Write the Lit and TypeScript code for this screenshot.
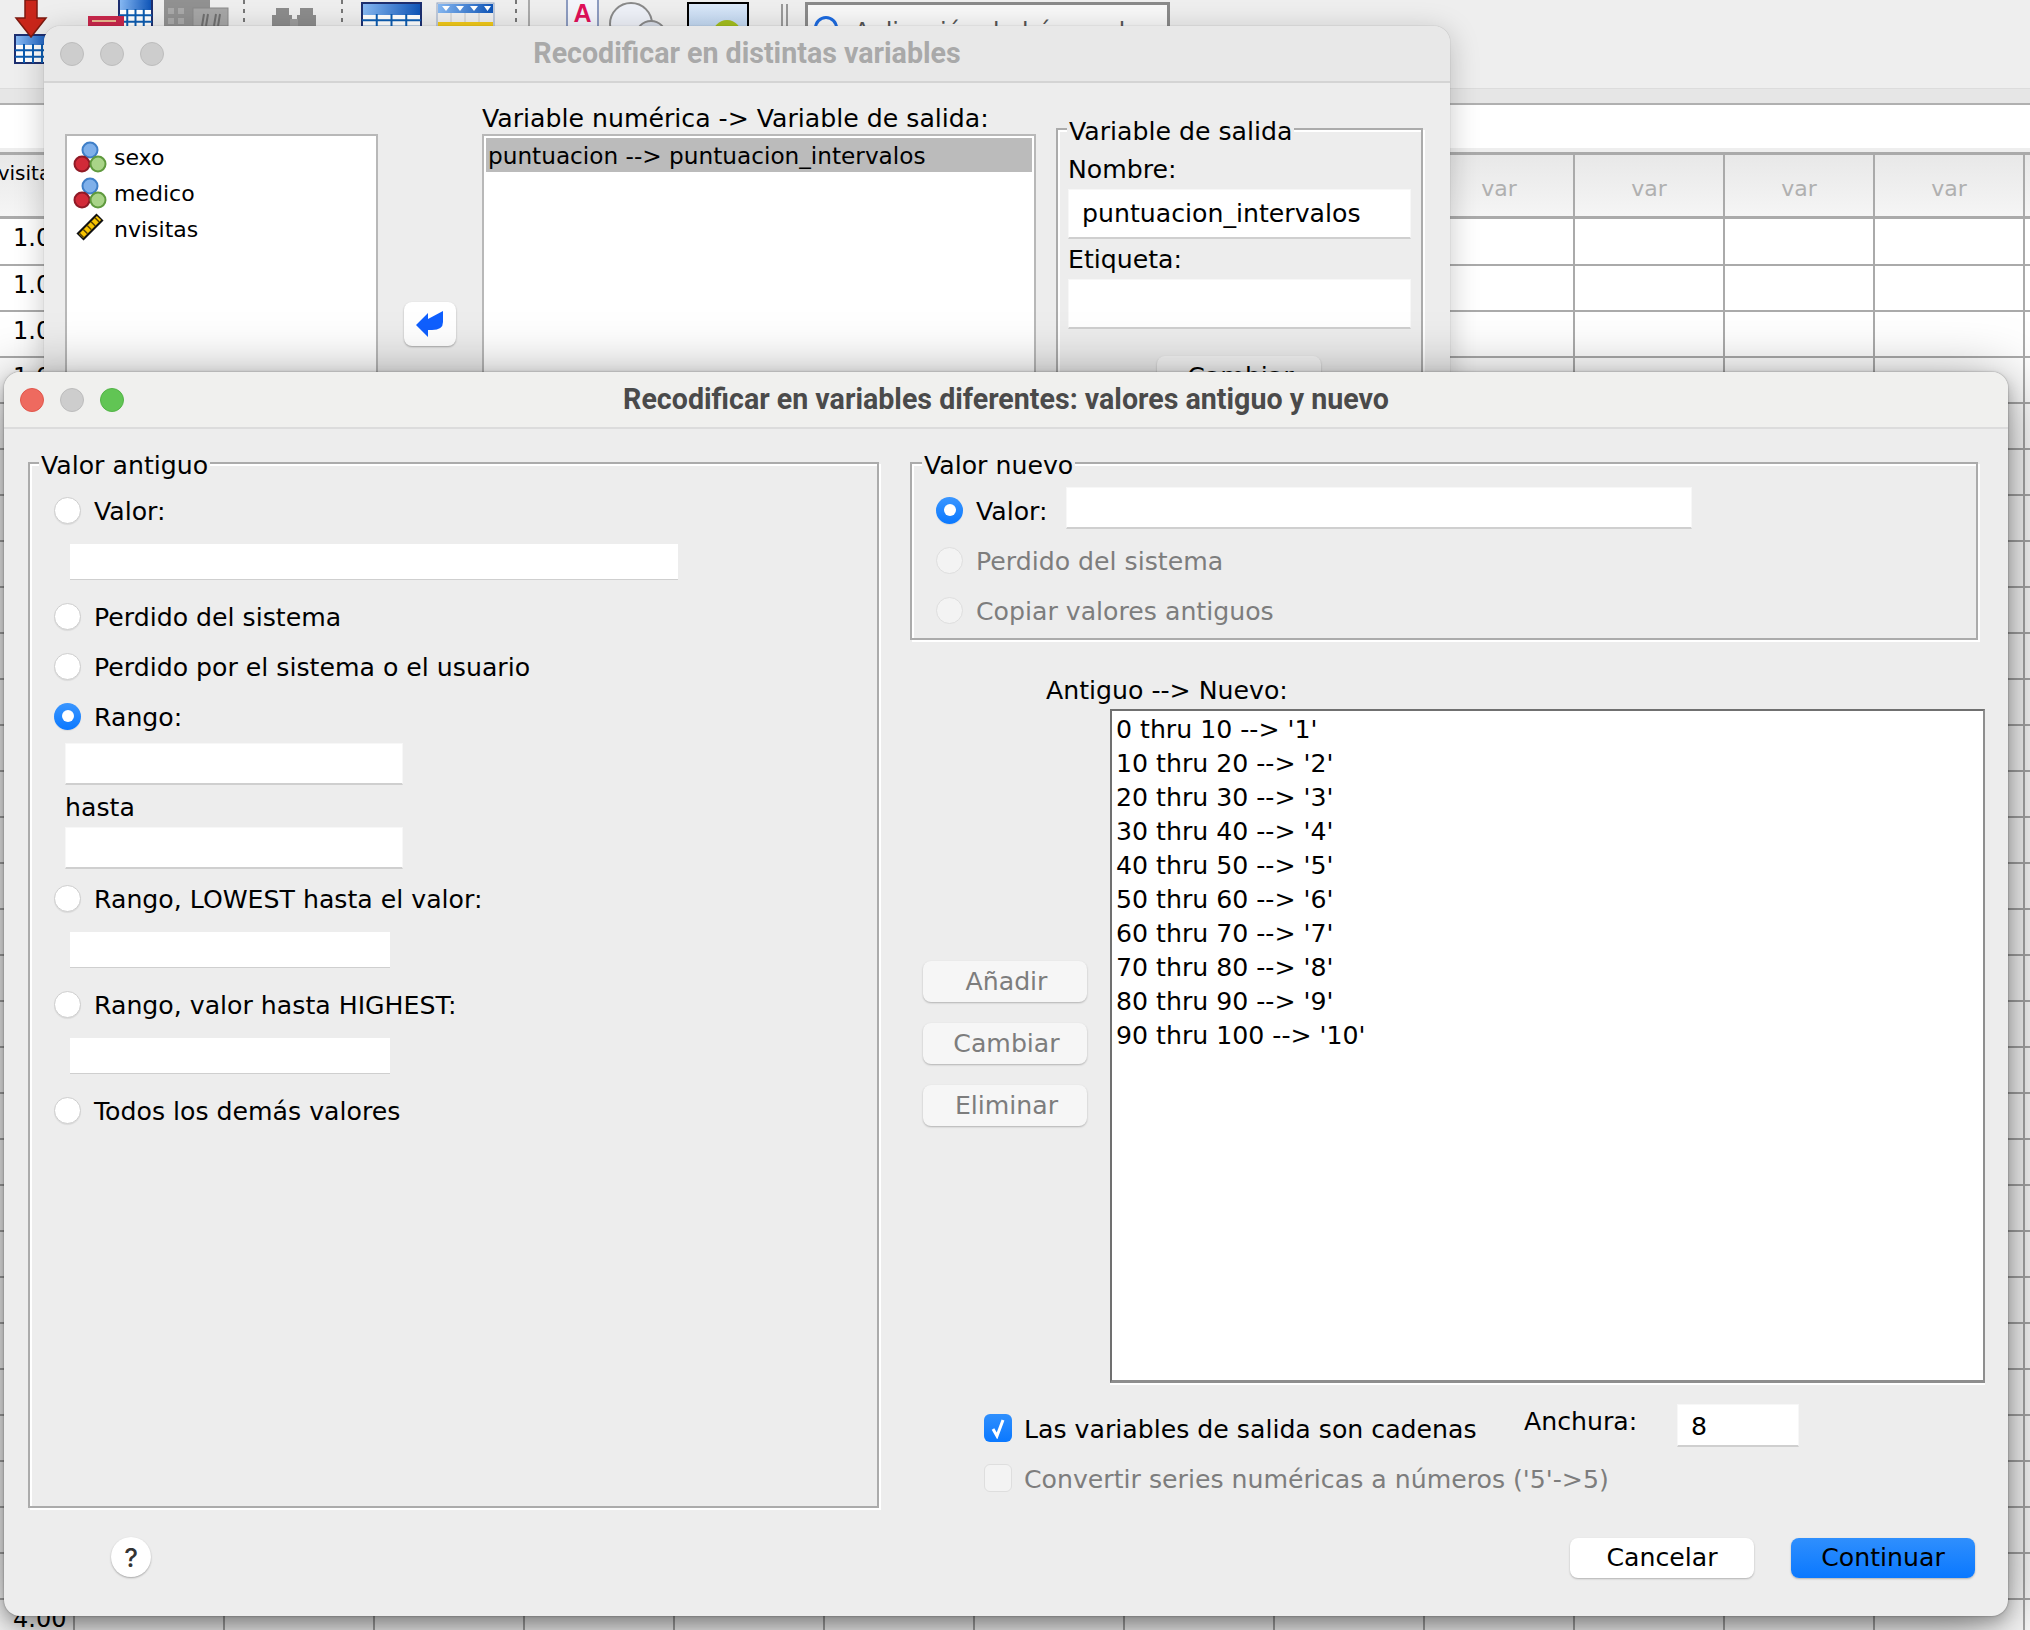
import { LitElement, css, html, svg } from 'lit'
import { customElement } from 'lit/decorators.js'

const RECODES = [
  "0 thru 10 --> '1'",
  "10 thru 20 --> '2'",
  "20 thru 30 --> '3'",
  "30 thru 40 --> '4'",
  "40 thru 50 --> '5'",
  "50 thru 60 --> '6'",
  "60 thru 70 --> '7'",
  "70 thru 80 --> '8'",
  "80 thru 90 --> '9'",
  "90 thru 100 --> '10'",
]

const SHEET_ROWS = 31
const SHEET_COLS = 13

// little spreadsheet glyph used a few times in the toolbar
const gridTable = (x: number, y: number, w: number, h: number, head: number) => {
  const cols = [1, 2, 3].map((i) => x + (w * i) / 4)
  const rows = [1, 2].map((i) => y + head + ((h - head) * i) / 3)
  return svg`
    <rect x=${x} y=${y} width=${w} height=${h} fill="#fff" stroke="#1d2f70" stroke-width="2" />
    <rect x=${x + 1} y=${y + 1} width=${w - 2} height=${head} fill="url(#head)" />
    ${cols.map((c) => svg`<line x1=${c} x2=${c} y1=${y + head} y2=${y + h} stroke="#0c5cb0" stroke-width="2" />`)}
    ${rows.map((r) => svg`<line x1=${x} x2=${x + w} y1=${r} y2=${r} stroke="#0c5cb0" stroke-width="2" />`)}
  `
}

const dotted = (x: number) => svg`<line x1=${x} x2=${x} y1="0" y2="30" stroke="#777" stroke-width="2" stroke-dasharray="4 5" />`

const toolbarIcons = svg`
  <svg class="tool-icons" width="800" height="88" viewBox="0 0 800 88">
    <defs>
      <linearGradient id="head" x1="0" y1="0" x2="1" y2="0">
        <stop offset="0" stop-color="#86b8f2" />
        <stop offset="1" stop-color="#0f55b8" />
      </linearGradient>
      <linearGradient id="sky" x1="0" y1="0" x2="0" y2="1">
        <stop offset="0" stop-color="#dbe8f8" />
        <stop offset="1" stop-color="#b9d2ef" />
      </linearGradient>
    </defs>
    ${gridTable(15, 35, 36, 28, 9)}
    <path d="M25 0H37V18H46L31 37L16 18H25Z" fill="#c9261a" stroke="#7c1a10" stroke-width="1.5" />
    ${gridTable(119, -2, 33, 30, 11)}
    <rect x="88" y="16" width="36" height="10" fill="#c9274c" />
    <rect x="92" y="20" width="24" height="2" fill="#e9b98f" />
    <rect x="164" y="0" width="46" height="26" fill="#919191" />
    <rect x="168" y="8" width="6" height="6" fill="#a9a9a9" />
    <rect x="178" y="8" width="6" height="6" fill="#a9a9a9" />
    <rect x="168" y="18" width="6" height="6" fill="#a9a9a9" />
    <rect x="178" y="18" width="6" height="6" fill="#a9a9a9" />
    <rect x="193" y="8" width="35" height="18" fill="#a6a6a6" stroke="#8a8a8a" />
    <path d="M204 14l-2 12M208 14l-2 12M216 14l-2 12M220 14l-2 12" stroke="#6f6f6f" stroke-width="2" />
    ${dotted(244)}
    <rect x="276" y="8" width="13" height="20" fill="#8c8c8c" />
    <rect x="272" y="15" width="20" height="13" fill="#8c8c8c" />
    <rect x="300" y="8" width="13" height="20" fill="#8c8c8c" />
    <rect x="297" y="15" width="19" height="13" fill="#8c8c8c" />
    <rect x="290" y="19" width="8" height="9" fill="#9c9c9c" />
    ${dotted(342)}
    ${gridTable(362, 3, 59, 30, 11)}
    <rect x="437" y="3" width="57" height="30" fill="#efefef" stroke="#8fa3c4" />
    <rect x="438" y="4" width="55" height="9" fill="url(#head)" />
    <path d="M442 6h8l-4 5ZM456 6h8l-4 5ZM470 6h8l-4 5ZM484 6h7l-3.5 5Z" fill="#fff" />
    <path d="M451 13v20M465 13v20M479 13v20" stroke="#c8c8c8" />
    <rect x="438" y="22" width="55" height="6" fill="#f2c919" />
    ${dotted(516)}
    <line x1="529" x2="529" y1="0" y2="30" stroke="#aaa" stroke-width="2" />
    <rect x="567" y="-2" width="31" height="34" fill="#f3f5fb" stroke="#8d9cc0" stroke-width="2" />
    <text x="582.5" y="22" text-anchor="middle" class="icon-a">A</text>
    <circle cx="631" cy="24" r="21" fill="#eef1f8" stroke="#8a8a8a" stroke-width="2" />
    <circle cx="651" cy="36" r="15" fill="#d8dde8" stroke="#8a8a8a" stroke-width="2" />
    <rect x="688" y="3" width="60" height="30" fill="url(#sky)" stroke="#000" stroke-width="2" />
    <ellipse cx="727" cy="36" rx="15" ry="16" fill="#a4bf1e" />
    <path d="M782 4V30M787 4V30" stroke="#999" stroke-width="2" />
  </svg>
`

const nominalIcon = html`
  <svg class="var-icon" width="36" height="32" viewBox="0 0 36 32">
    <circle cx="18" cy="9" r="7.5" fill="#7fb0ea" stroke="#3f7fc8" stroke-width="2" />
    <circle cx="10" cy="23" r="7.5" fill="#d22a38" stroke="#8f1a26" stroke-width="2" />
    <circle cx="26" cy="23" r="7.5" fill="#a9d488" stroke="#5f9a3e" stroke-width="2" />
  </svg>
`

const scaleIcon = html`
  <svg class="var-icon" width="36" height="32" viewBox="0 0 36 32">
    <line x1="8" y1="24" x2="28" y2="4" stroke="#111" stroke-width="10" />
    <line x1="9" y1="23" x2="27" y2="5" stroke="#f8c400" stroke-width="6" />
    <line x1="9" y1="23" x2="27" y2="5" stroke="#5a4300" stroke-width="6" stroke-dasharray="1.5 4" />
  </svg>
`

@customElement('app-root')
export class AppRoot extends LitElement {
  static styles = css`
    :host {
      display: block;
      position: relative;
      width: 2030px;
      height: 1630px;
      overflow: hidden;
      background: #eee;
      font-family: 'DejaVu Sans', 'Liberation Sans', sans-serif;
      font-size: 25.2px;
      color: #000;
    }

    /* spreadsheet window behind the dialogs */
    .toolbar {
      display: flex;
      height: 88px;
      background: #eee;
      overflow: hidden;
    }
    .tool-icons {
      flex: none;
    }
    .icon-a {
      font-family: 'Liberation Sans', sans-serif;
      font-weight: 700;
      font-size: 25px;
      fill: #e0105a;
    }
    .search {
      box-sizing: border-box;
      display: flex;
      align-items: flex-start;
      gap: 16px;
      width: 365px;
      height: 60px;
      margin: 2px 0 0 5px;
      padding: 11px 6px;
      border: 3px solid #8a8a8a;
      background: #f8f8f8;
      color: #555;
      font-size: 24px;
      white-space: nowrap;
    }
    .search-text {
      margin-top: 2px;
    }
    .search-ring {
      flex: none;
      box-sizing: border-box;
      width: 24px;
      height: 24px;
      border: 3px solid #1d6be0;
      border-radius: 50%;
    }
    .strip {
      box-sizing: border-box;
      height: 17px;
      background: #e6e6e6;
      border-top: 1px solid #dcdcdc;
      border-bottom: 2px solid #b0b0b0;
    }
    .formula {
      height: 43px;
      background: #fff;
    }
    .sheet {
      margin-top: 4px;
      border-top: 3px solid #aaa;
      background: #fff;
    }
    .sheet-head,
    .sheet-row {
      display: flex;
      box-sizing: border-box;
    }
    .sheet-head {
      height: 64px;
      border-bottom: 3px solid #aaa;
      background: linear-gradient(#e8e8e8, #f5f5f5);
      color: #b0b0b0;
      font-size: 22px;
    }
    .sheet-head .cell {
      padding-top: 6px;
    }
    .sheet-row {
      height: 46px;
      border-bottom: 2px solid #aaa;
      font-size: 24px;
    }
    .sheet-row.first {
      height: 47px;
    }
    .cell {
      box-sizing: border-box;
      flex: none;
      width: 150px;
      border-right: 2px solid #aaa;
      display: flex;
      align-items: center;
      justify-content: center;
    }
    .cell.lead {
      width: 75px;
      justify-content: flex-start;
      padding: 0 0 7px 13px;
      white-space: nowrap;
    }
    .sheet-head .cell.lead {
      padding: 0;
      color: #000;
      font-size: 20px;
    }
    .clipped-name {
      margin: -25px 0 0 -15px;
    }

    /* dialogs */
    .dialog {
      position: absolute;
      box-sizing: border-box;
      overflow: hidden;
      background: #ededed;
      border-radius: 16px;
    }
    .back {
      left: 44px;
      top: 26px;
      width: 1406px;
      height: 560px;
      box-shadow: 0 6px 30px rgba(0, 0, 0, 0.22), 0 0 1px rgba(0, 0, 0, 0.4);
    }
    .front {
      left: 4px;
      top: 372px;
      width: 2004px;
      height: 1244px;
      box-shadow: 0 12px 60px rgba(0, 0, 0, 0.5), 0 6px 14px rgba(0, 0, 0, 0.2), 0 0 2px rgba(0, 0, 0, 0.4);
    }
    .titlebar {
      position: relative;
      display: flex;
      align-items: center;
      justify-content: center;
      box-sizing: border-box;
      height: 57px;
      padding-bottom: 2px;
      background: #e8e8e8;
      border-bottom: 2px solid #d4d4d4;
      font-family: Roboto, 'Liberation Sans', sans-serif;
      font-weight: 700;
      font-size: 28.6px;
      color: #a9a9a9;
    }
    .front .titlebar {
      background: #f0f0ee;
      border-bottom-color: #dcdcdc;
      color: #4a4a4a;
    }
    .lights {
      position: absolute;
      left: 16px;
      top: 16px;
      display: flex;
      gap: 16px;
    }
    .light {
      box-sizing: border-box;
      width: 24px;
      height: 24px;
      border-radius: 50%;
      background: #cdcdcd;
      border: 1px solid #bcbcbc;
    }
    .light.red {
      background: #ee6a5f;
      border-color: #e0564b;
    }
    .light.green {
      background: #61c554;
      border-color: #52b346;
    }

    /* back dialog content */
    .back-body {
      display: flex;
      align-items: flex-start;
      padding-left: 21px;
    }
    .var-list {
      box-sizing: border-box;
      width: 313px;
      height: 420px;
      margin-top: 51px;
      padding: 3px 5px;
      border: 2px solid #b8b8b8;
      background: #fff;
      font-size: 22px;
    }
    .var-item {
      display: flex;
      align-items: center;
      gap: 6px;
      height: 36px;
    }
    .var-icon {
      flex: none;
    }
    .arrow-btn {
      flex: none;
      display: flex;
      align-items: center;
      justify-content: center;
      width: 52px;
      height: 44px;
      margin: 219px 0 0 26px;
      border-radius: 8px;
      background: #fff;
      box-shadow: 0 1px 2px rgba(0, 0, 0, 0.3);
    }
    .pair-col {
      flex: none;
      width: 554px;
      margin: 20px 0 0 26px;
    }
    .pair-label {
      height: 31px;
      line-height: 32px;
      white-space: nowrap;
    }
    .pair-list {
      box-sizing: border-box;
      height: 400px;
      padding: 2px 2px;
      border: 2px solid #b8b8b8;
      background: #fff;
      font-size: 23.2px;
    }
    .pair-sel {
      height: 34px;
      line-height: 35px;
      padding-left: 2px;
      background: #bbb;
      white-space: nowrap;
    }
    .out-group {
      flex: none;
      width: 367px;
      height: 400px;
      margin: 45px 0 0 20px;
      padding: 0 10px 0 10px;
    }
    .out-group .legend {
      margin-left: -1px;
    }
    .out-name {
      height: 30px;
      line-height: 30px;
      margin-top: 7px;
    }
    .out-name.second {
      margin-top: 6px;
    }
    .out-input {
      box-sizing: border-box;
      height: 50px;
      margin-top: 4px;
      padding-left: 13px;
      line-height: 48px;
    }
    .out-btn {
      margin: 27px 0 0 89px;
    }

    /* group box with etched line */
    .group {
      box-sizing: border-box;
      border: 2px solid #ababab;
      box-shadow: inset 2px 2px 0 #fff, 2px 2px 0 #fff;
    }
    .legend {
      width: fit-content;
      height: 34px;
      line-height: 36px;
      margin: -16px 0 0 -14px;
      padding: 0 2px;
      background: #ededed;
      white-space: nowrap;
    }

    /* form controls */
    .field {
      box-sizing: border-box;
      background: #fff;
      border-bottom: 1px solid #cfcfcf;
    }
    .field.framed {
      border: 1px solid #f7f7f7;
      border-bottom: 2px solid #cfcfcf;
    }
    .radio-row {
      display: flex;
      box-sizing: border-box;
      align-items: center;
      height: 36px;
      padding-top: 2px;
      white-space: nowrap;
    }
    .radio {
      flex: none;
      box-sizing: border-box;
      display: flex;
      align-items: center;
      justify-content: center;
      width: 27px;
      height: 27px;
      margin: -2px 13px 0 0;
      border: 1px solid #cecece;
      border-radius: 50%;
      background: #fff;
      box-shadow: 0 1px 1px rgba(0, 0, 0, 0.08);
    }
    .radio.on {
      border: none;
      background: linear-gradient(#3a96ff, #0a78ff);
    }
    .radio.on::after {
      content: '';
      width: 12px;
      height: 12px;
      border-radius: 50%;
      background: #fff;
    }
    .disabled {
      color: #7d7d7d;
    }
    .disabled .radio,
    .disabled .check {
      background: #f3f3f3;
      border-color: #dedede;
      box-shadow: none;
    }

    /* dialog body, left part */
    .front-body {
      display: flex;
      padding-left: 24px;
    }
    .left-col {
      flex: none;
      width: 851px;
      margin-top: 33px;
    }
    .old-group {
      height: 1046px;
      padding-left: 24px;
    }
    .old-group .legend {
      margin-left: -15px;
    }
    .old-first {
      margin-top: 10px;
    }
    .row-gap {
      margin-top: 14px;
    }
    .row-after-field {
      margin-top: 18px;
    }
    .field.wide {
      width: 608px;
      height: 36px;
      margin: 16px 0 0 16px;
    }
    .field.range {
      width: 338px;
      height: 42px;
      margin: 9px 0 0 11px;
    }
    .range-sep {
      height: 30px;
      line-height: 32px;
      margin: 7px 0 0 11px;
    }
    .field.range.lower {
      margin-top: 5px;
    }
    .row-after-range {
      margin-top: 11px;
    }
    .field.small {
      width: 320px;
      height: 36px;
      margin: 16px 0 0 16px;
    }
    .help {
      display: flex;
      align-items: center;
      justify-content: center;
      width: 40px;
      height: 40px;
      margin: 29px 0 0 83px;
      border-radius: 50%;
      background: #fff;
      box-shadow: 0 1px 2px rgba(0, 0, 0, 0.3);
      font-family: 'Inter', sans-serif;
      font-size: 26px;
      font-weight: 500;
      color: #333;
    }

    /* dialog body, right part */
    .right-col {
      flex: none;
      width: 1068px;
      margin: 33px 0 0 31px;
    }
    .new-group {
      height: 178px;
      padding-left: 24px;
    }
    .new-name {
      width: 90px;
    }
    .field.new-value {
      align-self: flex-start;
      width: 626px;
      height: 42px;
      margin-top: -7px;
    }
    .recode-label {
      height: 30px;
      line-height: 30px;
      margin: 36px 0 3px 136px;
    }
    .recode-row {
      display: flex;
      align-items: flex-start;
    }
    .side-buttons {
      flex: none;
      display: flex;
      flex-direction: column;
      gap: 21px;
      width: 164px;
      margin: 252px 0 0 13px;
    }
    .btn {
      display: flex;
      align-items: center;
      justify-content: center;
      box-sizing: border-box;
      height: 41px;
      padding-left: 3px;
      border-radius: 8px;
      background: #f6f6f6;
      box-shadow: 0 1px 2px rgba(0, 0, 0, 0.25);
      color: #7d7d7d;
    }
    .out-btn {
      width: 164px;
      height: 41px;
      color: #000;
    }
    .recode-list {
      flex: none;
      box-sizing: border-box;
      width: 875px;
      height: 674px;
      margin-left: 23px;
      padding: 2px 4px;
      border: 2px solid #707070;
      border-right-color: #8e8e8e;
      border-bottom: 3px solid #8e8e8e;
      background: #fff;
      box-shadow: 0 2px 0 #fff;
    }
    .recode-item {
      height: 34px;
      line-height: 34px;
      white-space: nowrap;
    }
    .options {
      display: flex;
      align-items: flex-start;
      margin-top: 21px;
    }
    .option-col {
      flex: none;
      width: 540px;
      margin: 10px 0 0 74px;
    }
    .check-row {
      display: flex;
      box-sizing: border-box;
      align-items: center;
      height: 28px;
      padding-top: 2px;
      white-space: nowrap;
    }
    .check-row + .check-row {
      margin-top: 22px;
    }
    .check {
      flex: none;
      box-sizing: border-box;
      display: flex;
      align-items: center;
      justify-content: center;
      width: 28px;
      height: 28px;
      margin: -2px 12px 0 0;
      border: 1px solid #d4d4d4;
      border-radius: 6px;
      background: #fff;
    }
    .check.on {
      border: none;
      background: linear-gradient(#2f8ffd, #0a78ff);
    }
    .width-label {
      flex: none;
      width: 153px;
      height: 34px;
      line-height: 36px;
    }
    .field.width-input {
      width: 122px;
      height: 43px;
      padding-left: 13px;
      line-height: 44px;
    }
    .actions {
      display: flex;
      justify-content: flex-end;
      gap: 37px;
      margin: 46px 3px 0 0;
    }
    .btn.main {
      width: 184px;
      height: 40px;
      padding: 0 0 2px;
      color: #000;
      background: #fff;
    }
    .btn.main.default {
      background: linear-gradient(#2f8ffd, #0a78ff);
    }
  `

  renderSheet() {
    const cols = Array.from({ length: SHEET_COLS })
    return html`
      <div class="toolbar">
        ${toolbarIcons}
        <div class="search"><span class="search-ring"></span><span class="search-text">Aplicación de búsqueda</span></div>
      </div>
      <div class="strip"></div>
      <div class="formula"></div>
      <div class="sheet">
        <div class="sheet-head">
          <div class="cell lead"><span class="clipped-name">nvisitas</span></div>
          ${cols.map(() => html`<div class="cell">var</div>`)}
        </div>
        ${Array.from({ length: SHEET_ROWS }).map(
          (_, i) => html`
            <div class="sheet-row ${i === 0 ? 'first' : ''}">
              <div class="cell lead">${i < 4 ? '1.00' : i === SHEET_ROWS - 1 ? '4.00' : ''}</div>
              ${cols.map(() => html`<div class="cell"></div>`)}
            </div>
          `,
        )}
      </div>
    `
  }

  renderBackDialog() {
    return html`
      <div class="dialog back">
        <div class="titlebar">
          <div class="lights">
            <span class="light"></span><span class="light"></span><span class="light"></span>
          </div>
          Recodificar en distintas variables
        </div>
        <div class="back-body">
          <div class="var-list">
            <div class="var-item">${nominalIcon}sexo</div>
            <div class="var-item">${nominalIcon}medico</div>
            <div class="var-item">${scaleIcon}nvisitas</div>
          </div>
          <div class="arrow-btn">
            <svg width="30" height="28" viewBox="0 0 30 28">
              <path d="M1 15L13 3V9L28 1V12Q28 20 17 20H13V27Z" fill="#0f5fff" />
            </svg>
          </div>
          <div class="pair-col">
            <div class="pair-label">Variable numérica -&gt; Variable de salida:</div>
            <div class="pair-list">
              <div class="pair-sel">puntuacion --&gt; puntuacion_intervalos</div>
            </div>
          </div>
          <div class="group out-group">
            <div class="legend">Variable de salida</div>
            <div class="out-name">Nombre:</div>
            <div class="field framed out-input">puntuacion_intervalos</div>
            <div class="out-name second">Etiqueta:</div>
            <div class="field framed out-input"></div>
            <div class="btn out-btn">Cambiar</div>
          </div>
        </div>
      </div>
    `
  }

  renderOldValues() {
    return html`
      <div class="group old-group">
        <div class="legend">Valor antiguo</div>
        <div class="radio-row old-first"><span class="radio"></span>Valor:</div>
        <div class="field wide"></div>
        <div class="radio-row row-after-field"><span class="radio"></span>Perdido del sistema</div>
        <div class="radio-row row-gap"><span class="radio"></span>Perdido por el sistema o el usuario</div>
        <div class="radio-row row-gap"><span class="radio on"></span>Rango:</div>
        <div class="field framed range"></div>
        <div class="range-sep">hasta</div>
        <div class="field framed range lower"></div>
        <div class="radio-row row-after-range"><span class="radio"></span>Rango, LOWEST hasta el valor:</div>
        <div class="field small"></div>
        <div class="radio-row row-after-field"><span class="radio"></span>Rango, valor hasta HIGHEST:</div>
        <div class="field small"></div>
        <div class="radio-row row-after-field"><span class="radio"></span>Todos los demás valores</div>
      </div>
    `
  }

  renderNewValues() {
    return html`
      <div class="group new-group">
        <div class="legend">Valor nuevo</div>
        <div class="radio-row old-first">
          <span class="radio on"></span><span class="new-name">Valor:</span>
          <div class="field framed new-value"></div>
        </div>
        <div class="radio-row row-gap disabled"><span class="radio"></span>Perdido del sistema</div>
        <div class="radio-row row-gap disabled"><span class="radio"></span>Copiar valores antiguos</div>
      </div>
    `
  }

  renderFrontDialog() {
    return html`
      <div class="dialog front">
        <div class="titlebar">
          <div class="lights">
            <span class="light red"></span><span class="light"></span><span class="light green"></span>
          </div>
          Recodificar en variables diferentes: valores antiguo y nuevo
        </div>
        <div class="front-body">
          <div class="left-col">
            ${this.renderOldValues()}
            <div class="help">?</div>
          </div>
          <div class="right-col">
            ${this.renderNewValues()}
            <div class="recode-label">Antiguo --&gt; Nuevo:</div>
            <div class="recode-row">
              <div class="side-buttons">
                <div class="btn">Añadir</div>
                <div class="btn">Cambiar</div>
                <div class="btn">Eliminar</div>
              </div>
              <div class="recode-list">
                ${RECODES.map((r) => html`<div class="recode-item">${r}</div>`)}
              </div>
            </div>
            <div class="options">
              <div class="option-col">
                <div class="check-row">
                  <span class="check on">
                    <svg width="16" height="22" viewBox="0 0 16 22">
                      <path d="M3 12L7 19L13 3" fill="none" stroke="#fff" stroke-width="3" />
                    </svg>
                  </span>
                  Las variables de salida son cadenas
                </div>
                <div class="check-row disabled"><span class="check"></span>Convertir series numéricas a números ('5'-&gt;5)</div>
              </div>
              <div class="width-label">Anchura:</div>
              <div class="field framed width-input">8</div>
            </div>
            <div class="actions">
              <div class="btn main">Cancelar</div>
              <div class="btn main default">Continuar</div>
            </div>
          </div>
        </div>
      </div>
    `
  }

  render() {
    return html`${this.renderSheet()}${this.renderBackDialog()}${this.renderFrontDialog()}`
  }
}

declare global {
  interface HTMLElementTagNameMap {
    'app-root': AppRoot;
  }
}
